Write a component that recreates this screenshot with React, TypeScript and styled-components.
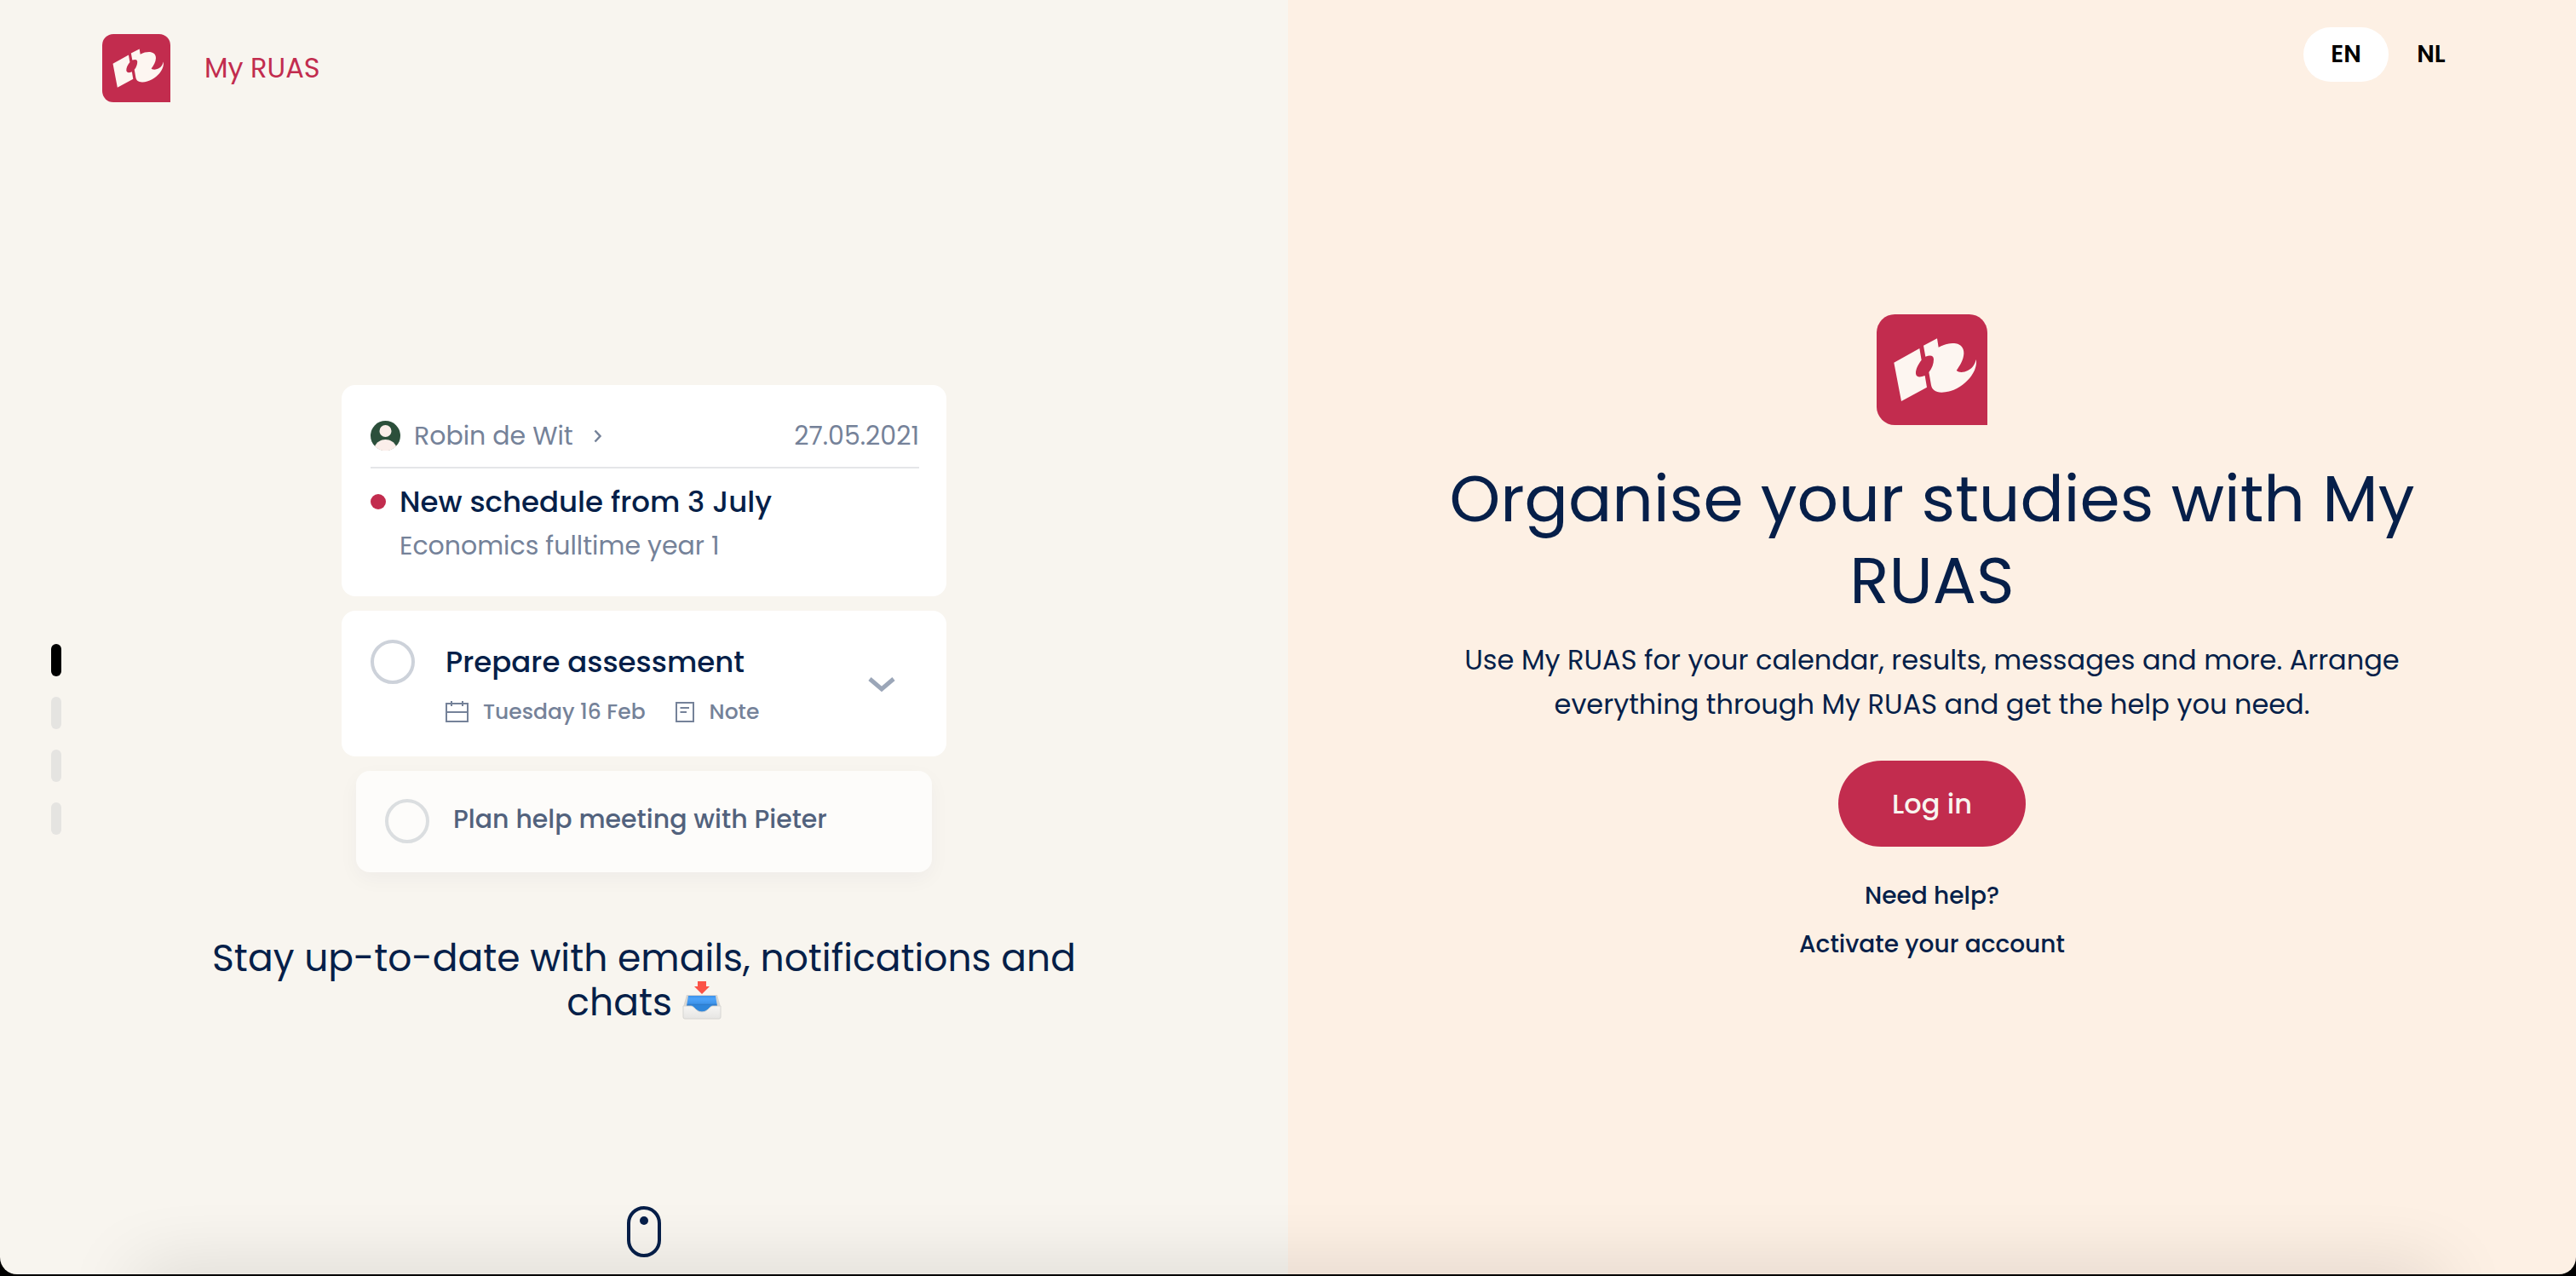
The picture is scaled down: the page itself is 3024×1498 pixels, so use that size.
import React from "react";
import styled, { createGlobalStyle } from "styled-components";

const color = {
  navy: "#061f49",
  red: "#c22c4e",
  cream: "#f8f5ef",
  peach: "#fdf0e4",
  slate: "#758299",
};

const GlobalStyle = createGlobalStyle`
  *, *::before, *::after { box-sizing: border-box; }
  body {
    margin: 0;
    background: #000;
    color: ${color.navy};
    font-family: Poppins, Inter, sans-serif;
  }
  h1, h2, h3, p { margin: 0; font-weight: 400; }
  button { font: inherit; border: 0; padding: 0; cursor: pointer; }
  a { color: inherit; text-decoration: none; }
`;

const Page = styled.div`
  position: relative;
  display: grid;
  grid-template-columns: 1fr 1fr;
  min-height: calc(100vh - 2px);
  border-radius: 0 0 20px 20px;
  overflow: hidden;
`;

const DockShadow = styled.div`
  position: absolute;
  left: 160px;
  right: 160px;
  bottom: -40px;
  height: 40px;
  box-shadow: 0 4px 88px 0 rgba(0, 0, 0, 0.2);
  pointer-events: none;
`;

const Showcase = styled.section`
  display: grid;
  grid-template-columns: 132px 1fr 132px;
  grid-template-rows: 240px 1fr 80px;
  background: ${color.cream};
`;

const Brand = styled.header`
  grid-column: 1 / -1;
  display: flex;
  align-items: center;
  align-self: start;
  gap: 40px;
  padding: 40px 120px;
  color: ${color.red};
  font-size: 32px;
  line-height: 48px;
`;

const LogoSvg = styled.svg<{ $size: number }>`
  display: block;
  width: ${(p) => p.$size}px;
  height: ${(p) => p.$size}px;
`;

const Steps = styled.nav`
  grid-column: 1;
  grid-row: 2 / 4;
  display: flex;
  flex-direction: column;
  align-items: center;
  justify-content: center;
  gap: 24px;
`;

const Step = styled.button<{ $active?: boolean }>`
  width: 12px;
  height: 38px;
  border-radius: 6px;
  background: ${(p) => (p.$active ? "#000" : "#e5e4e1")};
`;

const Slide = styled.div`
  grid-column: 2;
  grid-row: 2;
  display: flex;
  flex-direction: column;
  align-items: center;
  justify-content: center;
`;

const Cards = styled.div`
  display: flex;
  flex-direction: column;
  gap: 17px;
  width: 710px;
  max-width: 100%;
`;

const Card = styled.article`
  padding: 34px;
  border-radius: 16px;
  background: #fff;
`;

const MessageCard = styled(Card)`
  min-height: 248px;
  padding: 34px 32px 20px 34px;
`;

const MessageHead = styled.div`
  display: flex;
  align-items: center;
  height: 64px;
  padding-bottom: 10px;
  border-bottom: 2px solid #e5e6e8;
  color: ${color.slate};
  font-size: 30px;
  line-height: 40px;
`;

const Sender = styled.span`
  margin: 0 24px 0 16px;
`;

const MessageDate = styled.time`
  margin-left: auto;
`;

const Message = styled.div`
  display: grid;
  grid-template-columns: 18px 1fr;
  column-gap: 16px;
  align-items: center;
  padding-top: 15px;
`;

const Unread = styled.span`
  width: 18px;
  height: 18px;
  border-radius: 50%;
  background: ${color.red};
`;

const CardTitle = styled.h3`
  font-size: 34px;
  font-weight: 500;
  line-height: 48px;
`;

const MessageText = styled.p`
  grid-column: 2;
  color: ${color.slate};
  font-size: 30px;
  line-height: 56px;
`;

const TaskCard = styled(Card)`
  display: flex;
  min-height: 171px;
  padding-bottom: 24px;
  gap: 36px;
`;

const Tick = styled.input<{ $faded?: boolean }>`
  appearance: none;
  flex: none;
  width: 52px;
  height: 52px;
  margin: 0;
  border: 4px solid ${(p) => (p.$faded ? "#dbdee0" : "#cdd2da")};
  border-radius: 50%;
`;

const TaskBody = styled.div`
  flex: 1;
  padding-top: 2px;
`;

const TaskMeta = styled.div`
  display: flex;
  align-items: center;
  padding-top: 15px;
  color: ${color.slate};
  font-size: 25px;
  font-weight: 500;
  line-height: 40px;
`;

const MetaItem = styled.span`
  display: flex;
  align-items: center;
  gap: 17px;
  margin-right: 34px;
`;

const Expand = styled.button`
  align-self: center;
  margin-right: 26px;
  background: none;
  color: #9ba6b8;
`;

const NextCard = styled(Card)`
  display: flex;
  align-items: center;
  gap: 28px;
  height: 119px;
  margin: 0 17px;
  background: #fdfcfa;
  box-shadow: 0 8px 24px rgba(6, 31, 73, 0.04);
`;

const NextLabel = styled.span`
  padding-bottom: 4px;
  color: #52627d;
  font-size: 30px;
  font-weight: 500;
  line-height: 48px;
`;

const Caption = styled.h2`
  max-width: 1040px;
  padding: 75px 0 2px;
  font-size: 44px;
  line-height: 52px;
  text-align: center;
`;

const TraySvg = styled.svg`
  width: 46px;
  height: 46px;
  vertical-align: -6px;
`;

const ScrollHint = styled.div`
  grid-column: 2;
  grid-row: 3;
  justify-self: center;
  display: flex;
  justify-content: center;
  width: 40px;
  height: 60px;
  padding-top: 8px;
  border: 4px solid ${color.navy};
  border-radius: 20px;

  &::before {
    content: "";
    width: 10px;
    height: 10px;
    border-radius: 50%;
    background: ${color.navy};
  }
`;

const Login = styled.section`
  display: grid;
  grid-template-rows: 1fr auto 1fr;
  background: ${color.peach};
`;

const Languages = styled.nav`
  display: flex;
  align-self: start;
  justify-content: flex-end;
  padding: 32px 120px 0 0;
`;

const Language = styled.button<{ $active?: boolean }>`
  width: 100px;
  height: 64px;
  border-radius: 32px;
  background: ${(p) => (p.$active ? "#fff" : "transparent")};
  color: #000;
  font-size: 28px;
  font-weight: 600;
`;

const Intro = styled.main`
  display: flex;
  flex-direction: column;
  align-items: center;
  padding: 10px 160px 0;
  text-align: center;
`;

const Heading = styled.h1`
  max-width: 1160px;
  padding-top: 39px;
  font-size: 76px;
  line-height: 96px;
`;

const Lead = styled.p`
  max-width: 1120px;
  padding-top: 19px;
  font-size: 32px;
  line-height: 52px;
`;

const LoginButton = styled.button`
  width: 220px;
  height: 101px;
  margin: 40px 0 29px;
  border-radius: 51px;
  background: ${color.red};
  color: ${color.cream};
  font-size: 32px;
  font-weight: 500;
`;

const HelpLink = styled.a`
  font-size: 28px;
  font-weight: 500;
  line-height: 57px;
`;

function Logo({ size }: { size: number }) {
  return (
    <LogoSvg $size={size} viewBox="0 0 390 390" role="img" aria-label="RUAS">
      <path fill={color.red} d="M64 0H326A64 64 0 0 1 390 64V390H64A64 64 0 0 1 0 326V64A64 64 0 0 1 64 0Z" />
      <path
        fill="#fdf6f1"
        d="M61 170L151 120L158 161C145 178 137 194 138 209C140 222 152 223 170 216L177 257L87 306Z"
      />
      <path
        fill="#fdf6f1"
        d="M165 110L213 85L218 116C240 103 262 101 279 103C299 107 308 121 307 139C306 160 294 180 281 198C290 206 307 205 321 198C339 189 347 174 350 159C354 177 346 203 328 224C304 252 269 274 229 275C206 275 195 265 192 250L184 204C195 190 201 174 201 158C200 145 190 143 172 149Z"
      />
    </LogoSvg>
  );
}

function Avatar() {
  return (
    <svg width="35" height="35" viewBox="0 0 35 35" aria-hidden="true">
      <circle cx="17.5" cy="17.5" r="17.5" fill="#2c4f3b" />
      <circle cx="17.5" cy="12" r="7" fill="#fbeeea" />
      <path d="M5 30C7 25 12 22 17.5 22S28 25 30 30A17.5 17.5 0 0 1 5 30Z" fill="#fbeeea" />
    </svg>
  );
}

function Tray() {
  return (
    <TraySvg viewBox="0 0 46 46" role="img" aria-label="inbox tray">
      <defs>
        <linearGradient id="tray-back" x1="0" y1="0" x2="0" y2="1">
          <stop offset="0" stopColor="#3d92ea" />
          <stop offset="0.3" stopColor="#4da3fa" />
          <stop offset="0.75" stopColor="#3f94ea" />
          <stop offset="1" stopColor="#1f66b0" />
        </linearGradient>
        <linearGradient id="tray-front" x1="0" y1="0" x2="0" y2="1">
          <stop offset="0" stopColor="#f6f5f3" />
          <stop offset="1" stopColor="#e6e5e3" />
        </linearGradient>
      </defs>
      <path d="M5 16H41L45 30V43H1V30Z" fill="#d6d5d2" />
      <path d="M7 17H39L41 29H5Z" fill="url(#tray-back)" />
      <path d="M10 28H36L34 31C32 34 28 37 23 37S14 34 12 31Z" fill="#2f86db" />
      <path
        d="M1 29H10C14 29 16 36 23 36S32 29 36 29H45V42Q45 44 43 44H3Q1 44 1 42Z"
        fill="url(#tray-front)"
        stroke="#d6d5d2"
      />
      <path d="M18 0H28V6H32L23 15L14 6H18Z" fill="#fb5347" />
    </TraySvg>
  );
}

export default function App() {
  return (
    <>
      <GlobalStyle />
      <Page>
        <Showcase>
          <Brand>
            <Logo size={80} />
            <span>My RUAS</span>
          </Brand>
          <Steps aria-label="Slides">
            <Step $active aria-label="Slide 1" />
            <Step aria-label="Slide 2" />
            <Step aria-label="Slide 3" />
            <Step aria-label="Slide 4" />
          </Steps>
          <Slide>
            <Cards>
              <MessageCard>
                <MessageHead>
                  <Avatar />
                  <Sender>Robin de Wit</Sender>
                  <svg width="10" height="16" viewBox="0 0 10 16" fill="none" stroke={color.slate} strokeWidth="2.5" aria-hidden="true">
                    <path d="M1.5 1.5L7.5 8L1.5 14.5" />
                  </svg>
                  <MessageDate dateTime="2021-05-27">27.05.2021</MessageDate>
                </MessageHead>
                <Message>
                  <Unread />
                  <CardTitle>New schedule from 3 July</CardTitle>
                  <MessageText>Economics fulltime year 1</MessageText>
                </Message>
              </MessageCard>
              <TaskCard>
                <Tick type="checkbox" aria-labelledby="task-prepare" />
                <TaskBody>
                  <CardTitle id="task-prepare">Prepare assessment</CardTitle>
                  <TaskMeta>
                    <MetaItem>
                      <svg width="27" height="26" viewBox="0 0 27 26" fill="none" stroke={color.slate} strokeWidth="2" aria-hidden="true">
                        <path d="M1 3H26V24H1ZM1 13H26M7 0V6M20 0V6" />
                      </svg>
                      Tuesday 16 Feb
                    </MetaItem>
                    <MetaItem>
                      <svg width="24" height="26" viewBox="0 0 24 26" fill="none" stroke={color.slate} strokeWidth="2" aria-hidden="true">
                        <path d="M2 2H22V24H2ZM6.5 8H17M6.5 13H14" />
                      </svg>
                      Note
                    </MetaItem>
                  </TaskMeta>
                </TaskBody>
                <Expand aria-label="Expand">
                  <svg width="32" height="18" viewBox="0 0 32 18" fill="none" stroke="currentColor" strokeWidth="5" aria-hidden="true">
                    <path d="M2 2L16 14L30 2" />
                  </svg>
                </Expand>
              </TaskCard>
              <NextCard>
                <Tick $faded type="checkbox" aria-labelledby="task-plan" />
                <NextLabel id="task-plan">Plan help meeting with Pieter</NextLabel>
              </NextCard>
            </Cards>
            <Caption>
              Stay up-to-date with emails, notifications and chats <Tray />
            </Caption>
          </Slide>
          <ScrollHint />
        </Showcase>
        <Login>
          <Languages aria-label="Language">
            <Language $active>EN</Language>
            <Language>NL</Language>
          </Languages>
          <Intro>
            <Logo size={130} />
            <Heading>Organise your studies with My RUAS</Heading>
            <Lead>
              Use My RUAS for your calendar, results, messages and more. Arrange everything through My RUAS and get the
              help you need.
            </Lead>
            <LoginButton>Log in</LoginButton>
            <HelpLink href="#help">Need help?</HelpLink>
            <HelpLink href="#activate">Activate your account</HelpLink>
          </Intro>
        </Login>
        <DockShadow />
      </Page>
    </>
  );
}
